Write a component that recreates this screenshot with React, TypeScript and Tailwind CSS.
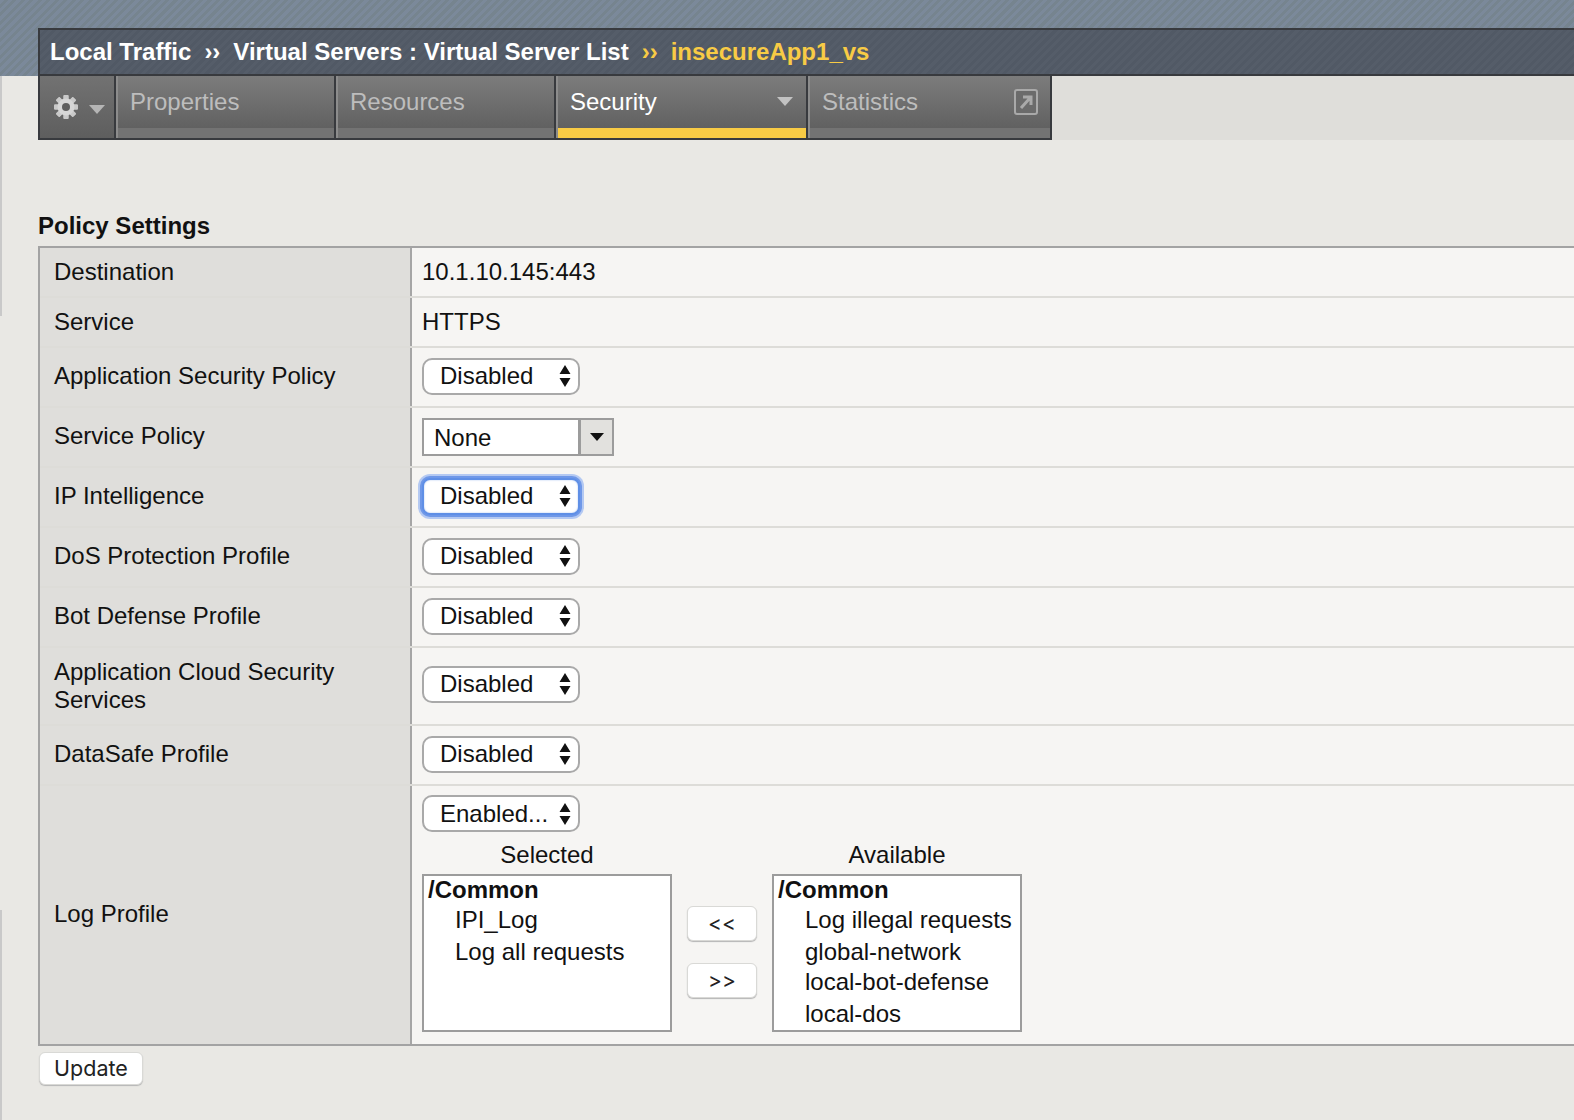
import React from "react";

const font = { fontFamily: '"Liberation Sans", Arial, sans-serif' };

function Updown() {
  return (
    <svg width="12" height="24" viewBox="0 0 12 24" className="shrink-0">
      <path d="M6 1 L11.5 10 H0.5 Z M6 23 L11.5 14 H0.5 Z" fill="#111" />
    </svg>
  );
}

function NativeSelect({ value, focused = false, lift = "mb-[2px]" }: { value: string; focused?: boolean; lift?: string }) {
  return (
    <div
      className={
        focused
          ? `flex h-[37px] w-[158px] items-center justify-between rounded-[8px] border-2 border-[#5f8fe6] bg-white pl-[16px] pr-[7px] text-[24px] text-[#111] shadow-[0_0_0_2px_#6f98e8,0_0_0_4px_#b4c9f2,inset_0_0_2px_#a9c2f0] ${lift}`
          : `flex h-[37px] w-[158px] items-center justify-between rounded-[10px] border-2 border-[#a9a9a9] bg-white pl-[16px] pr-[7px] text-[24px] text-[#111] ${lift}`
      }
    >
      <span>{value}</span>
      <Updown />
    </div>
  );
}

function Combo() {
  return (
    <div className="flex h-[38px] w-[192px] border-2 border-[#9c9c9c] bg-white text-[24px] text-[#111]">
      <div className="flex flex-1 items-center pl-[10px] pt-[2px]">None</div>
      <div className="flex w-[34px] items-center justify-center border-l-[3px] border-[#9c9c9c] bg-[#e2e1de]">
        <svg width="14" height="8" viewBox="0 0 14 8">
          <path d="M0 0 H14 L7 8 Z" fill="#111" />
        </svg>
      </div>
    </div>
  );
}

function Row({
  label,
  h,
  flush = false,
  children,
}: {
  label: React.ReactNode;
  h: string;
  flush?: boolean;
  children: React.ReactNode;
}) {
  return (
    <div className={`flex border-b-2 border-[#dddcd8] ${h}`}>
      <div
        className={
          flush
            ? "flex w-[372px] shrink-0 items-center border-r-2 border-[#a6a6a6] bg-[#dfdedb] pl-[14px] text-[24px] leading-[28px] text-[#111]"
            : "flex w-[372px] shrink-0 items-center border-r-2 border-[#a6a6a6] bg-[#dfdedb] pl-[14px] pb-[2px] text-[24px] leading-[28px] text-[#111]"
        }
      >
        {label}
      </div>
      <div className="flex flex-1 items-center pl-[10px] text-[24px] text-[#111]">{children}</div>
    </div>
  );
}

function Tab({
  label,
  width,
  active = false,
  right,
}: {
  label: string;
  width: string;
  active?: boolean;
  right?: React.ReactNode;
}) {
  return (
    <div className={`flex shrink-0 flex-col border-l-2 border-[#8c8c8c] ${width}`}>
      <div className="flex h-[52px] items-start justify-between bg-[linear-gradient(#7c7c7c,#616161)] pl-[12px] pr-[12px] pt-[12px]">
        <span className={active ? "text-[24px] leading-[28px] text-white" : "text-[24px] leading-[28px] text-[#bdbdbd]"}>
          {label}
        </span>
        {right}
      </div>
      <div className={active ? "h-[10px] bg-[#f8cb45]" : "h-[10px] bg-[#737373]"} />
    </div>
  );
}

function Gear() {
  const teeth = [0, 45, 90, 135, 180, 225, 270, 315];
  return (
    <svg width="26" height="26" viewBox="0 0 26 26">
      {teeth.map((a) => (
        <rect key={a} x="10.5" y="1" width="5" height="24" rx="1" fill="#c9c9c9" transform={`rotate(${a} 13 13)`} />
      ))}
      <circle cx="13" cy="13" r="8.5" fill="#d6d6d6" />
      <circle cx="13" cy="13" r="4" fill="#5e5e5e" />
    </svg>
  );
}

function ListBox({ items }: { items: { t: string; mt: string }[] }) {
  return (
    <div className="h-[158px] w-[250px] overflow-hidden border-2 border-[#9c9c9c] bg-white pl-[4px] text-[24px] leading-[28px] text-[#111]">
      <div className="font-bold">/Common</div>
      {items.map((i) => (
        <div key={i.t} className={`whitespace-nowrap pl-[27px] ${i.mt}`}>
          {i.t}
        </div>
      ))}
    </div>
  );
}

function SmallButton({ label, size }: { label: string; size: string }) {
  return (
    <div
      className={`flex items-center justify-center rounded-[6px] border border-[#d9d9d6] bg-white text-[#222] shadow-[0_1px_1px_#b5b5b5] ${size}`}
      style={{ fontFamily: 'Inter, "Liberation Sans", sans-serif' }}
    >
      {label}
    </div>
  );
}

export default function App() {
  return (
    <div className="relative min-h-[1120px] w-full overflow-hidden bg-[#e9e8e4]" style={font}>
      {/* Top band */}
      <div className="h-[76px] bg-[repeating-linear-gradient(135deg,#7b899a_0px,#7b899a_3px,#76848f_3px,#76848f_6px)] pt-[28px] pl-[38px]">
        <div className="flex h-[48px] items-center gap-[13px] border-y-2 border-l-2 border-[#383a3e] bg-[repeating-linear-gradient(135deg,#555d69_0px,#555d69_3px,#515965_3px,#515965_6px)] pl-[10px] text-[24px] font-bold text-white">
          <span>Local Traffic</span>
          <span>››</span>
          <span>Virtual Servers : Virtual Server List</span>
          <span className="text-[#f8cb45]">››</span>
          <span className="text-[#f8cb45]">insecureApp1_vs</span>
        </div>
      </div>

      {/* Tabs */}
      <div className="flex h-[64px]">
        <div className="w-[38px] shrink-0" />
        <div className="flex border-x-2 border-b-2 border-[#383a3e] bg-[#383a3e]">
          <div className="flex h-[62px] w-[74px] items-center gap-[10px] bg-[linear-gradient(#727272,#5e5e5e)] pl-[13px]">
            <Gear />
            <svg width="16" height="9" viewBox="0 0 16 9" className="mt-[4px]">
              <path d="M0 0 H16 L8 9 Z" fill="#b5b5b5" />
            </svg>
          </div>
          <div className="w-[2px] bg-[#383a3e]" />
          <Tab label="Properties" width="w-[218px]" />
          <div className="w-[2px] bg-[#383a3e]" />
          <Tab label="Resources" width="w-[218px]" />
          <div className="w-[2px] bg-[#383a3e]" />
          <Tab
            label="Security"
            width="w-[250px]"
            active
            right={
              <svg width="16" height="9" viewBox="0 0 16 9" className="mt-[9px] mr-[1px]">
                <path d="M0 0 H16 L8 9 Z" fill="#c2c2c2" />
              </svg>
            }
          />
          <div className="w-[2px] bg-[#383a3e]" />
          <Tab
            label="Statistics"
            width="w-[242px]"
            right={
              <svg width="24" height="26" viewBox="0 0 24 26" className="mt-[1px]">
                <rect x="1" y="1" width="22" height="24" rx="2" fill="#6b6b6b" stroke="#a9a9a9" strokeWidth="2" />
                <path d="M7 19 L16 9 M9 8 H17 V16" fill="none" stroke="#a9a9a9" strokeWidth="3" />
              </svg>
            }
          />
        </div>
        <div className="flex-1 bg-[#dfdeda]" />
      </div>

      {/* Content */}
      <div className="pl-[38px]">
        <h2 className="pt-[72px] text-[24px] font-bold leading-[28px] text-[#111]">Policy Settings</h2>
        <div className="mt-[6px] border-y-2 border-l-2 border-y-[#a3a3a3] border-l-[#a3a3a3] bg-[#f6f5f3]">
          <Row label="Destination" h="h-[50px]" flush>10.1.10.145:443</Row>
          <Row label="Service" h="h-[50px]" flush>HTTPS</Row>
          <Row label="Application Security Policy" h="h-[60px]"><NativeSelect value="Disabled" /></Row>
          <Row label="Service Policy" h="h-[60px]"><Combo /></Row>
          <Row label="IP Intelligence" h="h-[60px]"><NativeSelect value="Disabled" focused /></Row>
          <Row label="DoS Protection Profile" h="h-[60px]"><NativeSelect value="Disabled" /></Row>
          <Row label="Bot Defense Profile" h="h-[60px]"><NativeSelect value="Disabled" /></Row>
          <Row
            label={
              <span>
                Application Cloud Security
                <br />
                Services
              </span>
            }
            h="h-[78px]"
            flush
          >
            <NativeSelect value="Disabled" lift="mb-[4px]" />
          </Row>
          <Row label="DataSafe Profile" h="h-[60px]"><NativeSelect value="Disabled" /></Row>
          <div className="flex h-[258px]">
            <div className="flex w-[372px] shrink-0 items-center border-r-2 border-[#a6a6a6] bg-[#dfdedb] pl-[14px] pb-[2px] text-[24px] text-[#111]">
              Log Profile
            </div>
            <div className="flex-1 pl-[10px] pt-[9px]">
              <NativeSelect value="Enabled..." />
              <div className="mt-[9px] flex items-start text-[24px] text-[#111]">
                <div className="flex flex-col items-center">
                  <div className="h-[33px] leading-[28px]">Selected</div>
                  <ListBox
                    items={[
                      { t: "IPI_Log", mt: "mt-[2px]" },
                      { t: "Log all requests", mt: "mt-[4px]" },
                    ]}
                  />
                </div>
                <div className="ml-[15px] mr-[15px] flex flex-col gap-[22px] pt-[65px]">
                  <SmallButton label="<<" size="h-[35px] w-[70px] text-[21px]" />
                  <SmallButton label=">>" size="h-[35px] w-[70px] text-[21px]" />
                </div>
                <div className="flex flex-col items-center">
                  <div className="h-[33px] leading-[28px]">Available</div>
                  <ListBox
                    items={[
                      { t: "Log illegal requests", mt: "mt-[2px]" },
                      { t: "global-network", mt: "mt-[4px]" },
                      { t: "local-bot-defense", mt: "mt-[2px]" },
                      { t: "local-dos", mt: "mt-[4px]" },
                    ]}
                  />
                </div>
              </div>
            </div>
          </div>
        </div>
        <div className="mt-[6px]">
          <SmallButton label="Update" size="h-[33px] w-[104px] ml-[1px] text-[21.5px]" />
        </div>
      </div>

      {/* Edge of the neighbouring frame at the far left */}
      <div className="absolute left-0 top-[76px] h-[240px] w-[2px] bg-[#c9c9c9]" />
      <div className="absolute left-0 top-[910px] h-[210px] w-[2px] bg-[#c9c9c9]" />
    </div>
  );
}
